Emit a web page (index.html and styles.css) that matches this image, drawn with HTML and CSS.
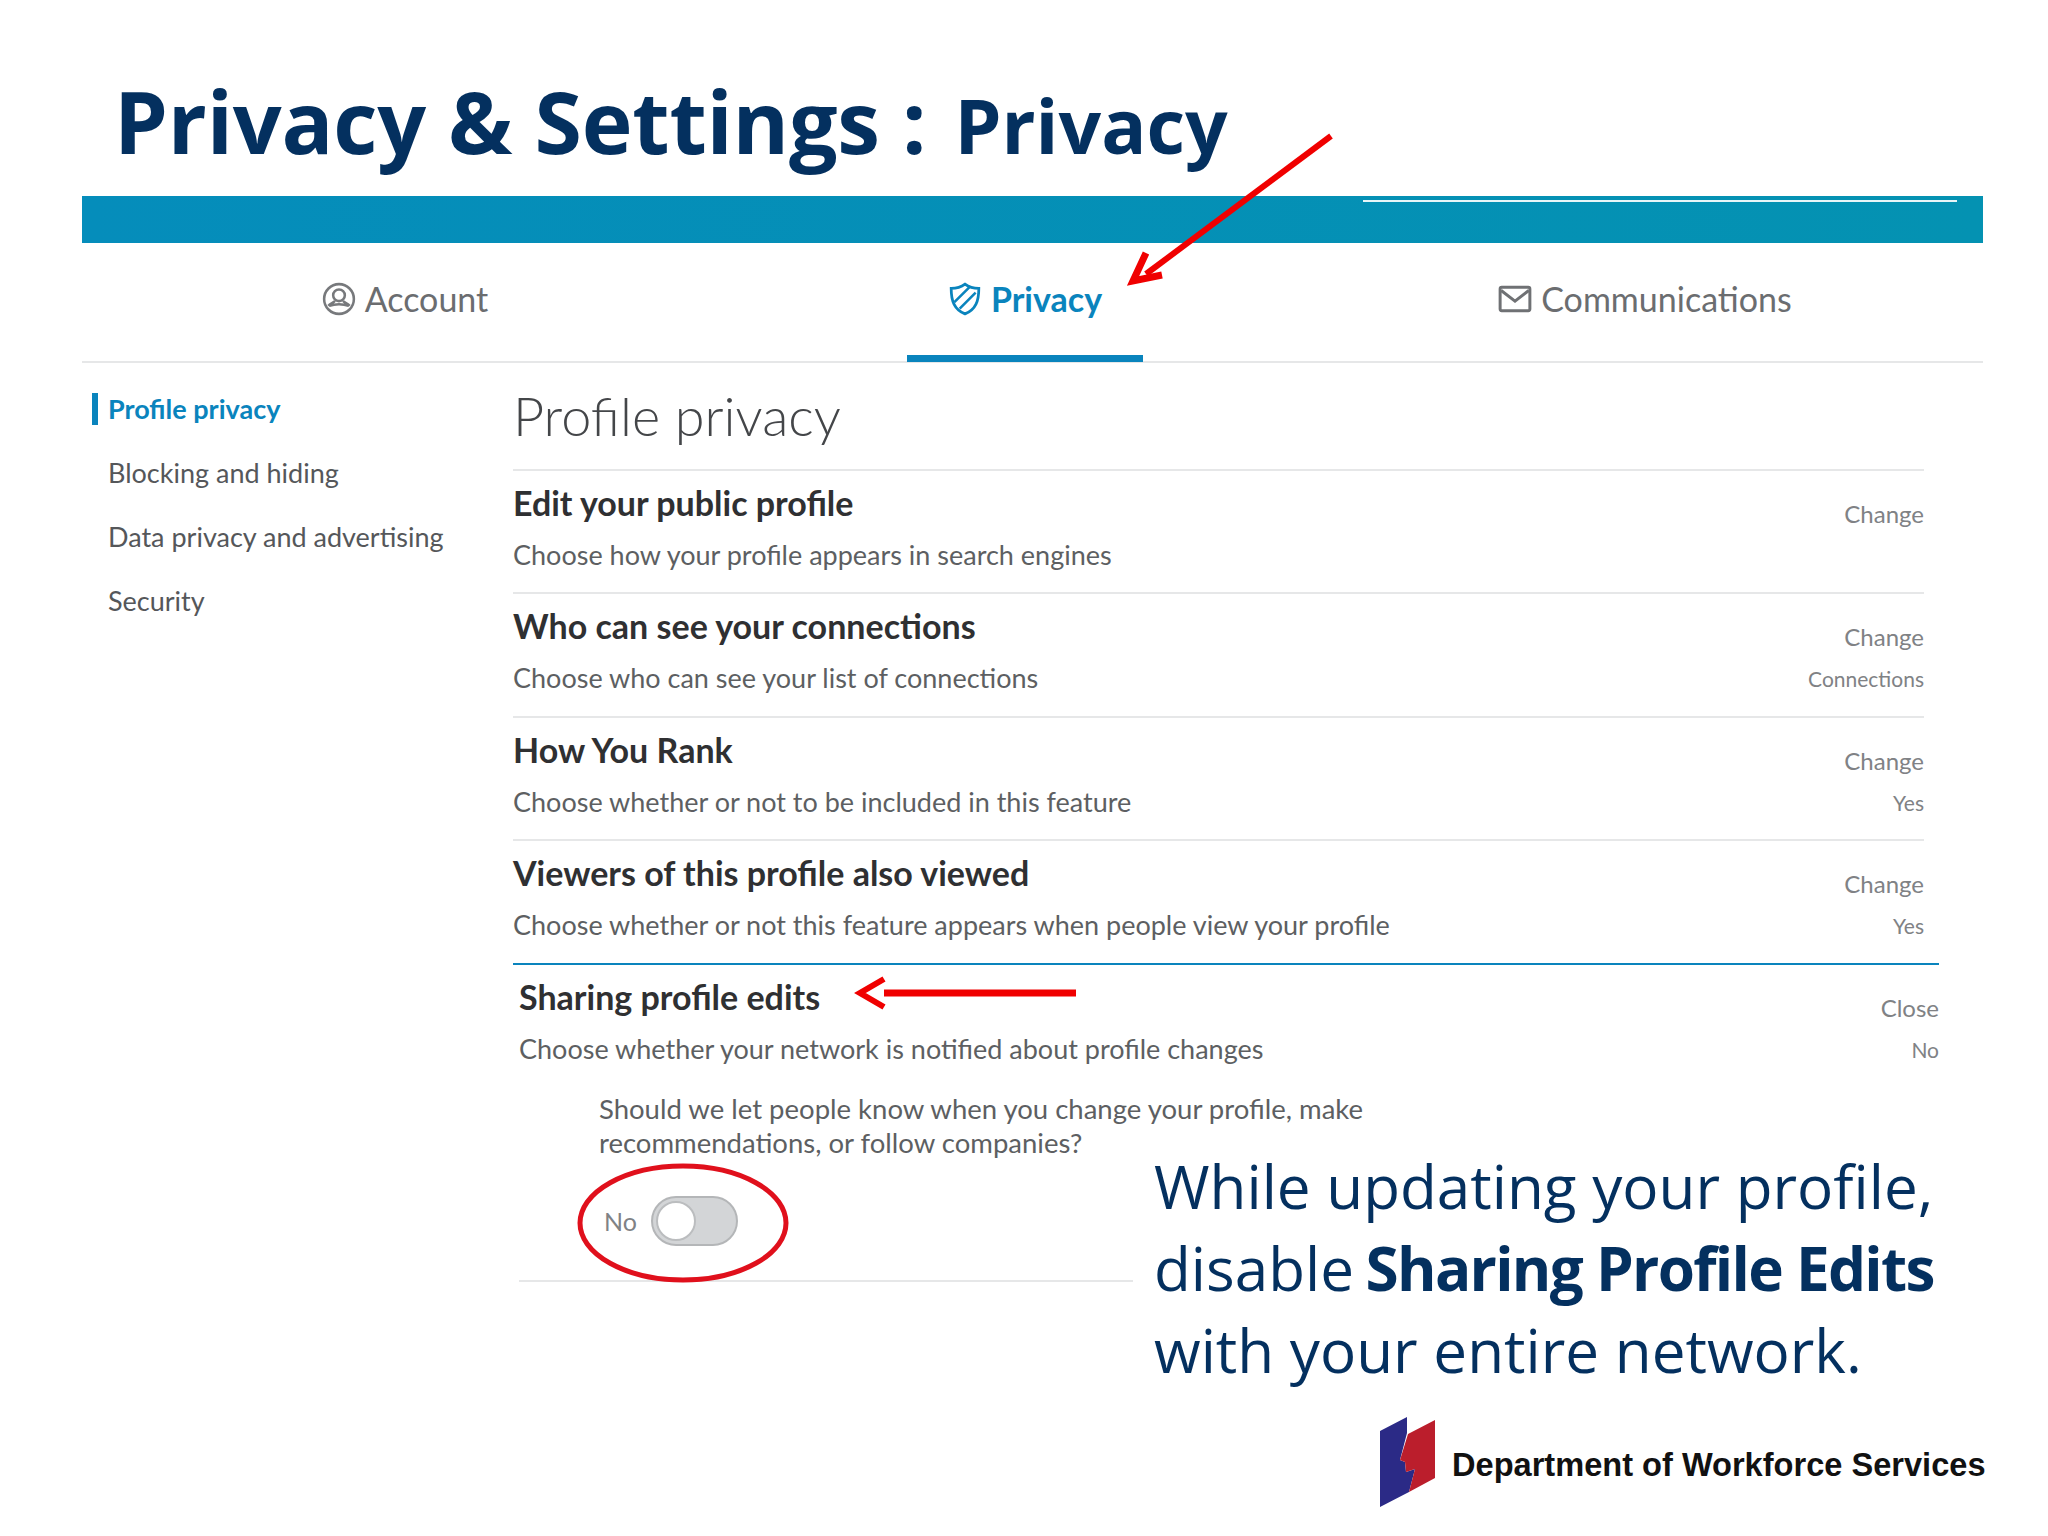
FILE: index.html
```html
<!DOCTYPE html>
<html lang="en">
<head>
  <meta charset="UTF-8">
  <title>Privacy &amp; Settings : Privacy</title>
  <link rel="stylesheet" href="styles.css">
</head>
<body>
  <div class="slide">
    <h1 class="slide-title">Privacy &amp; Settings : <span class="slide-title-small">Privacy</span></h1>
    <div class="band"><div class="band-line"></div></div>

    <nav class="tabs">
      <a class="tab">
        <svg class="tab-icon" viewBox="0 0 32 32" fill="none" stroke="#77797c" stroke-width="2.4">
          <circle cx="16" cy="16" r="14"/>
          <circle cx="16" cy="12.500" r="5.500"/>
          <path d="M12 17.500c0 2-4 2.500-6 5M20 17.500c0 2 4 2.500 6 5M7 22.500c5-2 13-2 18 0"/>
        </svg>
        Account
      </a>
      <a class="tab tab-active">
        <svg class="tab-icon" viewBox="0 0 32 32" fill="none" stroke="#0a84bd" stroke-width="2.600">
          <path d="M16 2c4 3 8 4 13 4 0 12-3 20-13 24C6 26 3 18 3 6c5 0 9-1 13-4z"/>
          <path d="M6 19L20 5M11 25L26 10" stroke-width="2.400"/>
        </svg>
        Privacy
      </a>
      <a class="tab">
        <svg class="tab-icon" viewBox="0 0 32 32" fill="none" stroke="#6f7174" stroke-width="2.800">
          <rect x="2" y="5" width="28" height="22" rx="1.500"/>
          <path d="M3 8l13 10L29 8"/>
        </svg>
        Communications
      </a>
    </nav>

    <div class="content">
      <ul class="side-nav">
        <li class="side-item side-item-active">Profile privacy</li>
        <li class="side-item">Blocking and hiding</li>
        <li class="side-item">Data privacy and advertising</li>
        <li class="side-item">Security</li>
      </ul>

      <main class="main">
        <h2 class="page-heading">Profile privacy</h2>

        <div class="row">
          <div class="row-text">
            <h3 class="row-title">Edit your public profile</h3>
            <p class="row-desc">Choose how your profile appears in search engines</p>
          </div>
          <div class="row-side"><span class="row-action">Change</span></div>
        </div>
        <div class="row">
          <div class="row-text">
            <h3 class="row-title">Who can see your connections</h3>
            <p class="row-desc">Choose who can see your list of connections</p>
          </div>
          <div class="row-side"><span class="row-action">Change</span><span class="row-value">Connections</span></div>
        </div>
        <div class="row">
          <div class="row-text">
            <h3 class="row-title">How You Rank</h3>
            <p class="row-desc">Choose whether or not to be included in this feature</p>
          </div>
          <div class="row-side"><span class="row-action">Change</span><span class="row-value">Yes</span></div>
        </div>
        <div class="row">
          <div class="row-text">
            <h3 class="row-title">Viewers of this profile also viewed</h3>
            <p class="row-desc">Choose whether or not this feature appears when people view your profile</p>
          </div>
          <div class="row-side"><span class="row-action">Change</span><span class="row-value">Yes</span></div>
        </div>

        <section class="open-row">
          <div class="row-head">
            <div class="row-text">
              <h3 class="row-title">Sharing profile edits</h3>
              <p class="row-desc">Choose whether your network is notified about profile changes</p>
            </div>
            <div class="row-side"><span class="row-action">Close</span><span class="row-value">No</span></div>
          </div>
          <div class="open-body">
            <p class="question">Should we let people know when you change your profile, make recommendations, or follow companies?</p>
            <div class="toggle-row">
              <span class="toggle-label">No</span>
              <span class="toggle"><span class="toggle-knob"></span></span>
            </div>
          </div>
        </section>
      </main>
    </div>

    <!-- red marks drawn over the slide -->
    <svg class="marks" viewBox="0 0 2048 1536" fill="none" stroke="#f00000">
      <path d="M1331 136L1146 274" stroke-width="6"/>
      <path d="M1146 253L1133 281L1162 275" stroke-width="7"/>
      <path d="M884 993H1076" stroke-width="7"/>
      <path d="M884 979L860 993L884 1007" stroke-width="6"/>
      <ellipse cx="683" cy="1223" rx="103" ry="57" stroke="#e0101c" stroke-width="5"/>
    </svg>

    <p class="callout">While updating your profile,<br>disable <b class="callout-strong">Sharing Profile Edits</b><br>with your entire network.</p>

    <div class="brand">
      <svg class="brand-logo" viewBox="0 0 55 90">
        <path fill="#2b2a86" d="M0 14L27 0V16L20 43L25 45L26 55L35 52L29 75L0 90Z"/>
        <path fill="#bb1e2c" d="M28 17L55 3V61L29 75L35 52L26 55L25 45L20 43Z"/>
      </svg>
      <span class="brand-name">Department of Workforce Services</span>
    </div>
  </div>
</body>
</html>
```
FILE: styles.css
```css
* {
  box-sizing: border-box;
}

body {
  margin: 0;
  background: #fff;
}

.slide {
  position: relative;
  width: 2048px;
  height: 1536px;
  padding: 67px 65px 0 82px;
  overflow: hidden;
  font-family: Lato, sans-serif;
  color: #3c3d3f;
}

.slide-title {
  margin: 0 0 0 32px;
  height: 129px;
  font-family: "Open Sans", sans-serif;
  font-size: 86px;
  line-height: 108px;
  font-weight: 700;
  letter-spacing: -0.2px;
  color: #04305f;
}

.slide-title-small {
  margin-left: 6px;
  font-size: 75px;
  letter-spacing: 0;
}

.band {
  height: 47px;
  padding: 4px 26px 0 1281px;
  background: linear-gradient(90deg, #058dbb, #0492b2);
}

.band-line {
  height: 2px;
  background: #e8f6f8;
}

/* tabs */
.tabs {
  display: grid;
  grid-template-columns: 620px 620px 620px;
  height: 120px;
  padding-left: 13px;
  border-bottom: 2px solid #e6e7e8;
}

.tab {
  display: flex;
  align-items: center;
  justify-content: center;
  gap: 9px;
  height: 119px;
  padding-bottom: 8px;
  font-size: 34px;
  color: #6b6d70;
}

.tab-active {
  position: relative;
  font-weight: 700;
  color: #0a84bd;
}

.tab-active::after {
  content: "";
  position: absolute;
  left: 50%;
  bottom: 0;
  width: 236px;
  height: 7px;
  margin-left: -118px;
  background: #0a84bd;
}

.tab-icon {
  width: 34px;
  height: 34px;
}

/* left nav and rows */
.content {
  display: flex;
}

.side-nav {
  width: 431px;
  margin: 0;
  padding: 30px 0 0 10px;
  list-style: none;
}

.side-item {
  height: 64px;
  padding-left: 16px;
  font-size: 27px;
  line-height: 32px;
  color: #55575a;
}

.side-item-active {
  border-left: 6px solid #0a84bd;
  padding-left: 10px;
  height: 32px;
  margin-bottom: 32px;
  font-weight: 700;
  color: #0a84bd;
}

.main {
  flex: 1;
}

.page-heading {
  margin: 0;
  height: 106px;
  padding-top: 18px;
  font-size: 54px;
  line-height: 70px;
  font-weight: 300;
  color: #444649;
}

.row {
  display: flex;
  justify-content: space-between;
  width: 1411px;
  height: 123.4px;
  border-top: 2px solid #e6e7e8;
}

.row-text {
  padding-top: 12px;
}

.row-title {
  margin: 0;
  font-size: 34px;
  line-height: 40px;
  font-weight: 700;
  color: #2f3032;
}

.row-desc {
  margin: 14px 0 0;
  font-size: 27px;
  line-height: 36px;
  color: #5d5f62;
}

.row-side {
  display: flex;
  flex-direction: column;
  align-items: flex-end;
  padding-top: 28px;
}

.row-action {
  font-size: 24px;
  line-height: 30px;
  color: #808285;
}

.row-value {
  margin-top: 13px;
  font-size: 21px;
  line-height: 28px;
  color: #808285;
}

.open-row {
  width: 1426px;
  border-top: 2px solid #0a84bd;
  padding-left: 6px;
}

.row-head {
  display: flex;
  justify-content: space-between;
}

.open-body {
  width: 614px;
  height: 190px;
  margin-top: 25px;
  padding-left: 80px;
  border-bottom: 2px solid #e6e7e8;
}

.question {
  width: 820px;
  margin: 0;
  font-size: 27.5px;
  line-height: 34px;
  color: #5d5f62;
}

.toggle-row {
  display: flex;
  align-items: center;
  gap: 14px;
  margin-top: 36px;
  padding-left: 5px;
}

.toggle-label {
  font-size: 25px;
  color: #808285;
}

.toggle {
  display: block;
  width: 87px;
  height: 50px;
  padding: 3px;
  border: 2px solid #b4b6b8;
  border-radius: 25px;
  background: #d3d5d7;
}

.toggle-knob {
  display: block;
  width: 40px;
  height: 40px;
  border: 2px solid #bbbdbf;
  border-radius: 50%;
  background: #fff;
}

/* overlays */
.marks {
  position: absolute;
  left: 0;
  top: 0;
  width: 2048px;
  height: 1536px;
}

.callout {
  position: absolute;
  left: 1154px;
  top: 1145px;
  margin: 0;
  white-space: nowrap;
  font-family: "Open Sans", sans-serif;
  font-size: 60.2px;
  line-height: 82px;
  color: #04305f;
}

.callout-strong {
  margin-left: -4px;
  font-weight: 700;
  letter-spacing: -1.7px;
}

.brand {
  position: absolute;
  left: 1380px;
  top: 1417px;
  display: flex;
  align-items: center;
  gap: 17px;
}

.brand-logo {
  width: 55px;
  height: 90px;
}

.brand-name {
  padding-top: 5px;
  font-family: "Liberation Sans", sans-serif;
  font-size: 32.6px;
  font-weight: 700;
  color: #111;
}
```
